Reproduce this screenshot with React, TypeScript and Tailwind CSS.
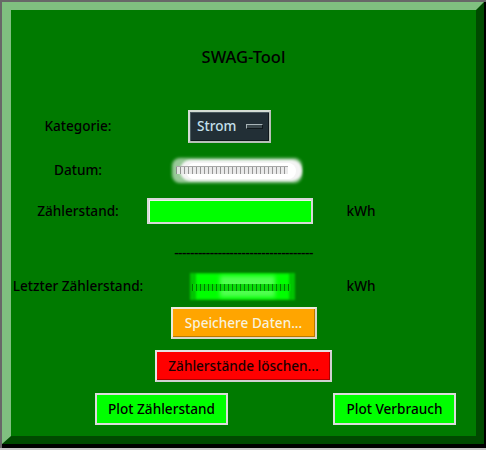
import React from "react";

const font = { fontFamily: '"Noto Sans", "Open Sans", sans-serif' };

function DateBlob() {
  return (
    <div className="relative w-[130px] h-[25px]">
      <div className="absolute inset-0 rounded-[8px] bg-white blur-[1.5px] opacity-60" />
      <div className="absolute left-[8px] right-0 top-[2px] bottom-[2px] rounded-[10px] bg-[#f4f4f4] blur-[1px]" />
      <div className="absolute left-[14px] right-[6px] top-[5px] bottom-[4px] rounded-[10px] bg-white blur-[0.5px]" />
      <div className="absolute left-[4px] right-[14px] top-[9px] h-[7px] bg-[repeating-linear-gradient(90deg,#8a8a8a_0px,#8a8a8a_1.5px,#e8e8e8_1.5px,#e8e8e8_4px)] blur-[0.7px] opacity-90" />
      <div className="absolute left-[4px] right-[14px] top-[8px] h-[1px] bg-[#a8a8a8] blur-[0.5px]" />
    </div>
  );
}

function GreenBlob() {
  return (
    <div className="relative w-[105px] h-[27px]">
      <div className="absolute inset-0 bg-[#00d800] blur-[1px] opacity-80" />
      <div className="absolute left-[6px] right-[6px] top-[1px] bottom-[1px] bg-[#00ff00] blur-[1px]" />
      <div className="absolute left-[30px] right-[20px] top-[3px] bottom-[3px] bg-[#50ff50] blur-[2px]" />
      <div className="absolute left-[2px] right-[4px] top-[11px] h-[7px] bg-[repeating-linear-gradient(90deg,#006800_0px,#006800_1.5px,#00d800_1.5px,#00d800_4px)] blur-[0.7px] opacity-85" />
    </div>
  );
}

export default function App() {
  return (
    <div className="w-[486px] h-[450px] bg-[#c8c8c8]" style={font}>
      <div className="w-[486px] h-[448px] bg-black border-t-2 border-l-2 border-[#686868]">
        <div className="w-[482px] h-[442px] bg-[#007a00] border-t-[8px] border-l-[9px] border-r-[8px] border-b-[8px] border-t-[#80c080] border-l-[#80c080] border-r-[#004a00] border-b-[#004a00] flex flex-col text-[13.6px] font-medium text-black">
          {/* Title */}
          <div className="mt-[32px] h-[30px] flex items-center justify-center text-[16.5px]">SWAG-Tool</div>

          {/* Kategorie */}
          <div className="mt-[38px] h-[32px] grid grid-cols-[134px_196px_40px] items-center">
            <div className="text-center">Kategorie:</div>
            <div className="ml-[43px] w-[83px] h-[33px] border-2 border-t-[#d4dcd4] border-l-[#d4dcd4] border-r-[#b8c0b8] border-b-[#b8c0b8] bg-[#222f36] flex items-center pl-[7px] pr-[6px] shadow-[inset_1px_1px_0_#4a5a60,inset_-1px_-1px_0_#10181c]">
              <span className="text-[#c4e0ec]">Strom</span>
              <span className="ml-auto w-[17px] h-[5px] bg-[#3a474c] border-t border-l border-[#a8b4b8] border-r-[#10181c] border-b-[#10181c] border-r border-b" />
            </div>
            <div />
          </div>

          {/* Datum */}
          <div className="mt-[15px] h-[26px] grid grid-cols-[134px_196px_40px] items-center">
            <div className="text-center">Datum:</div>
            <div className="ml-[27px]">
              <DateBlob />
            </div>
            <div />
          </div>

          {/* Zählerstand */}
          <div className="mt-[15px] h-[26px] grid grid-cols-[134px_196px_40px] items-center">
            <div className="text-center">Zählerstand:</div>
            <div className="ml-[2px] w-[166px] h-[26px] bg-[#00ff00] border-2 border-[#d8d8d8] shadow-[inset_1px_1px_0_#f0f0f0]" />
            <div className="text-center">kWh</div>
          </div>

          {/* Dashes */}
          <div className="mt-[19px] h-[20px] flex items-center justify-center">
            <span className="tracking-[-0.4px]">-----------------------------------</span>
          </div>

          {/* Letzter Zählerstand */}
          <div className="mt-[10px] h-[27px] grid grid-cols-[134px_196px_40px] items-center">
            <div className="text-center whitespace-nowrap">Letzter Zählerstand:</div>
            <div className="ml-[45px]">
              <GreenBlob />
            </div>
            <div className="text-center">kWh</div>
          </div>

          {/* Speichere */}
          <div className="mt-[7px] h-[32px] flex justify-center">
            <div className="w-[146px] h-[32px] bg-[#ffa500] border-2 border-t-[#ececdc] border-l-[#ececdc] border-r-[#d8d8c8] border-b-[#d8d8c8] shadow-[inset_-1px_-1px_0_#b87800] flex items-center justify-center text-[#f8f2dc]">
              Speichere Daten...
            </div>
          </div>

          {/* Löschen */}
          <div className="mt-[11px] h-[32px] flex justify-center">
            <div className="w-[177px] h-[32px] bg-[#ff0000] border-2 border-t-[#e4e4e4] border-l-[#e4e4e4] border-r-[#d0d0d0] border-b-[#d0d0d0] shadow-[inset_-1px_-1px_0_#b00000] flex items-center justify-center text-[#1a0000]">
              Zählerstände löschen...
            </div>
          </div>

          {/* Plot buttons */}
          <div className="mt-[11px] h-[32px] flex">
            <div className="ml-[84px] w-[133px] h-[32px] bg-[#00ff00] border-2 border-[#dcdcdc] flex items-center justify-center">
              Plot Zählerstand
            </div>
            <div className="ml-[105px] w-[123px] h-[32px] bg-[#00ff00] border-2 border-[#dcdcdc] flex items-center justify-center">
              Plot Verbrauch
            </div>
          </div>
        </div>
      </div>
    </div>
  );
}
